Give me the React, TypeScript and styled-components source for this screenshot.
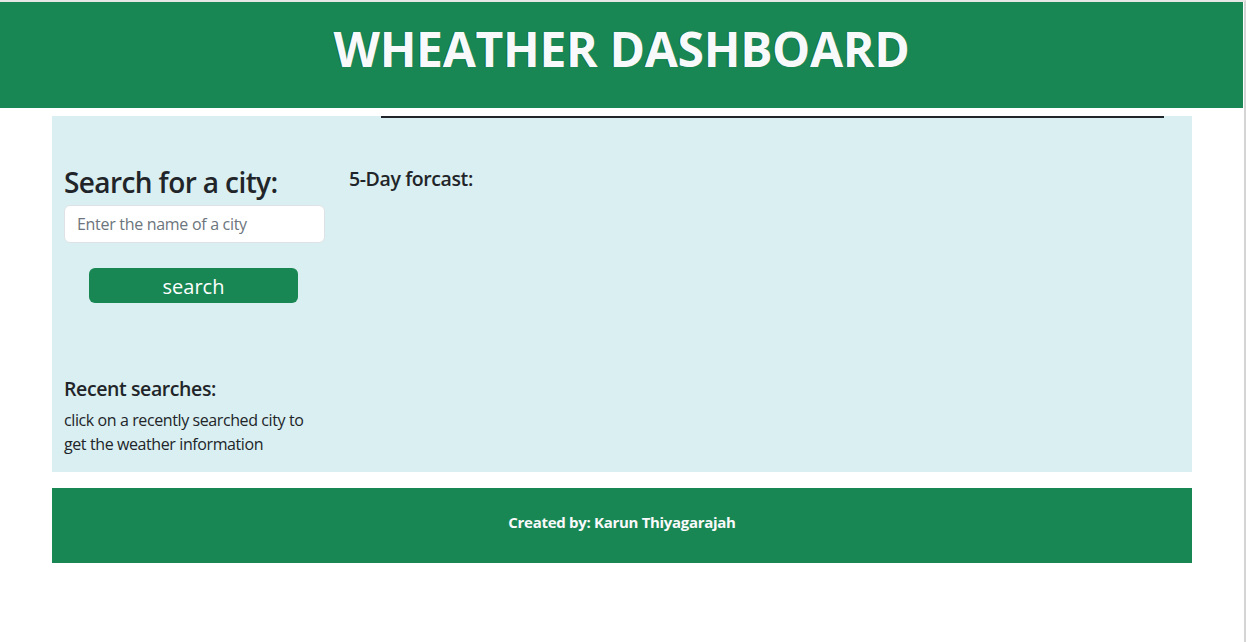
import React from "react";
import styled, { createGlobalStyle } from "styled-components";

const GlobalStyle = createGlobalStyle`
  html, body {
    margin: 0;
    padding: 0;
    background: #ffffff;
  }
  body {
    font-family: "Open Sans", "Noto Sans", "Liberation Sans", sans-serif;
    color: #212529;
    font-size: 16px;
    line-height: 1.5;
  }
  * { box-sizing: border-box; }
`;

const Page = styled.div`
  width: 1246px;
  min-height: 642px;
  border-top: 2px solid #e6e6e6;
  border-right: 2px solid #d4d4d4;
  padding-right: 1px;
`;

const Header = styled.header`
  background: #198754;
  height: 106px;
  display: flex;
  justify-content: center;
  align-items: flex-start;
`;

const Title = styled.h1`
  margin: 18px 0 0;
  font-size: 48px;
  font-weight: 700;
  line-height: 1.2;
  letter-spacing: -0.3px;
  color: #f8f9fa;
  text-shadow: -1px 0 0 rgba(0, 0, 0, 0.25);
`;

const Main = styled.main`
  width: 1140px;
  margin: 8px 0 0 52px;
  background: #daeff1;
  height: 356px;
  display: flex;
  flex-direction: column;
`;

const TopRule = styled.div`
  height: 2px;
  width: 783px;
  margin-left: 329px;
  background: #212529;
`;

const Row = styled.div`
  display: flex;
  padding: 0 12px;
`;

const SideCol = styled.section`
  width: 261px;
  display: flex;
  flex-direction: column;
  padding-top: 48px;
`;

const ForecastCol = styled.section`
  margin-left: 24px;
  padding-top: 49px;
`;

const SearchHeading = styled.h2`
  margin: 0 0 5px;
  font-size: 28px;
  font-weight: 600;
  line-height: 1.2;
  letter-spacing: -0.6px;
`;

const CityInput = styled.input`
  width: 100%;
  height: 38px;
  padding: 6px 12px;
  font-family: inherit;
  font-size: 16px;
  letter-spacing: -0.3px;
  color: #212529;
  background: #ffffff;
  border: 1px solid #dee2e6;
  border-radius: 6px;
  outline: none;
  &::placeholder {
    color: #6c757d;
  }
`;

const SearchButton = styled.button`
  width: 209px;
  height: 35px;
  margin: 25px 0 0 25px;
  background: #198754;
  color: #ffffff;
  border: none;
  border-radius: 6px;
  font-family: inherit;
  font-size: 20px;
  line-height: 1;
  padding: 3px 0 0;
  cursor: pointer;
`;

const SubHeading = styled.h5`
  margin: 0;
  font-size: 19.5px;
  font-weight: 600;
  line-height: 1.2;
  letter-spacing: -0.4px;
`;

const RecentHeading = styled(SubHeading)`
  margin-top: 74px;
  margin-bottom: 8px;
`;

const Hint = styled.p`
  margin: 0;
  font-size: 16px;
  line-height: 24px;
  letter-spacing: -0.4px;
`;

const Footer = styled.footer`
  width: 1140px;
  margin: 16px 0 0 52px;
  height: 75px;
  padding-bottom: 6px;
  background: #198754;
  display: flex;
  align-items: center;
  justify-content: center;
`;

const Credit = styled.p`
  margin: 0;
  color: #f8f9fa;
  font-size: 15px;
  font-weight: 700;
  letter-spacing: -0.3px;
`;

export default function App() {
  return (
    <>
      <GlobalStyle />
      <Page>
        <Header>
          <Title>WHEATHER DASHBOARD</Title>
        </Header>
        <Main>
          <TopRule />
          <Row>
            <SideCol>
              <SearchHeading>Search for a city:</SearchHeading>
              <CityInput placeholder="Enter the name of a city" />
              <SearchButton>search</SearchButton>
              <RecentHeading>Recent searches:</RecentHeading>
              <Hint>
                click on a recently searched city to
                <br />
                get the weather information
              </Hint>
            </SideCol>
            <ForecastCol>
              <SubHeading>5-Day forcast:</SubHeading>
            </ForecastCol>
          </Row>
        </Main>
        <Footer>
          <Credit>Created by: Karun Thiyagarajah</Credit>
        </Footer>
      </Page>
    </>
  );
}
